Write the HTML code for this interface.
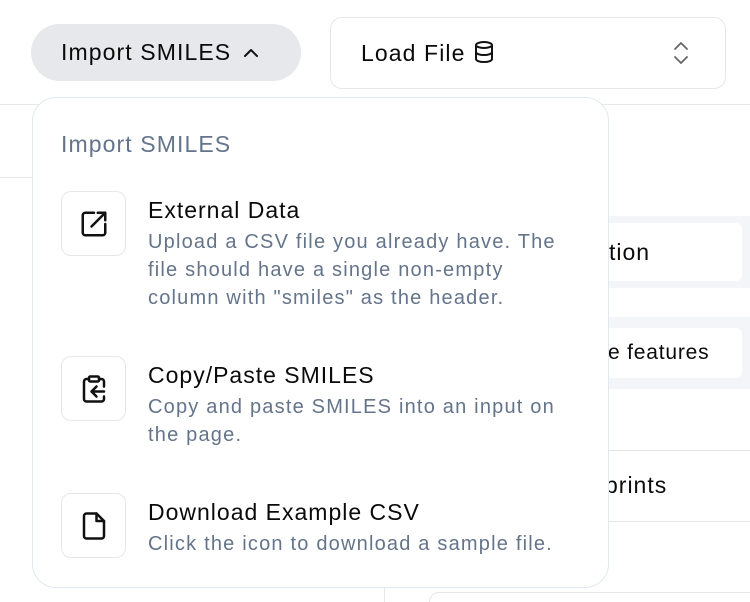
<!DOCTYPE html>
<html><head><meta charset="utf-8"><style>
*{box-sizing:border-box;margin:0;padding:0}
html,body{width:750px;height:602px;overflow:hidden}
body{background:#fff;position:relative;font-family:"Liberation Sans",sans-serif;color:#0a0a0a}
.abs{position:absolute}
.btn{left:31px;top:24px;width:270px;height:57px;border-radius:29px;background:#e7e8eb;font-size:23px;line-height:57px;padding-left:30px;letter-spacing:1.1px;white-space:nowrap}
.load{left:330px;top:17px;width:396px;height:72px;border:1px solid #e5e7eb;border-radius:12px;font-size:23px;line-height:70px;padding-left:30px;letter-spacing:1.1px}
.menu{left:32px;top:97px;width:577px;height:491px;border:1px solid #e2e8f0;border-radius:24px;background:#fff}
.h{left:61px;top:131px;font-size:23px;color:#64748b;letter-spacing:1.1px}
.ib{left:61px;width:65px;height:65px;border:1px solid #e5e7eb;border-radius:10px;display:flex;align-items:center;justify-content:center}
.t{left:148px;font-size:23px;letter-spacing:1px;white-space:nowrap}
.d{left:148px;font-size:20px;line-height:28px;color:#64748b;letter-spacing:1.2px;white-space:nowrap}
.line{background:#e5e7eb}
</style></head><body>
<div class="abs line" style="left:0;top:104px;width:750px;height:1px"></div>
<div class="abs line" style="left:0;top:177px;width:40px;height:1px"></div>
<div class="abs" style="left:600px;top:216px;width:150px;height:72px;background:#f3f5f8"></div>
<div class="abs" style="left:600px;top:223px;width:142px;height:58px;background:#fff;border-radius:6px;font-size:23px;letter-spacing:1px;line-height:58px;padding-left:9px">tion</div>
<div class="abs" style="left:600px;top:317px;width:150px;height:72px;background:#f3f5f8"></div>
<div class="abs" style="left:600px;top:328px;width:142px;height:50px;background:#fff;border-radius:6px;font-size:21px;letter-spacing:0.8px;line-height:50px;padding-left:8px">e features</div>
<div class="abs line" style="left:600px;top:450px;width:150px;height:1px"></div>
<div class="abs" style="left:605px;top:472px;font-size:23px;letter-spacing:1px">prints</div>
<div class="abs line" style="left:600px;top:521px;width:150px;height:1px"></div>
<div class="abs line" style="left:384px;top:587px;width:1px;height:15px"></div>
<div class="abs" style="left:429px;top:592px;width:340px;height:20px;border:1px solid #e5e7eb;border-radius:12px"></div>

<div class="abs btn">Import SMILES <svg width="20" height="14" viewBox="0 0 20 14" style="margin-left:2px;vertical-align:1px"><path d="M4 11l6-6 6 6" fill="none" stroke="#111" stroke-width="2" stroke-linecap="round" stroke-linejoin="round"/></svg></div>
<div class="abs load">Load File <svg width="22" height="24" viewBox="0 0 22 24" style="vertical-align:-3px;margin-left:0"><ellipse cx="11" cy="5" rx="8" ry="3" fill="none" stroke="#111" stroke-width="2"/><path d="M3 5v14c0 1.7 3.6 3 8 3s8-1.3 8-3V5M3 12c0 1.7 3.6 3 8 3s8-1.3 8-3" fill="none" stroke="#111" stroke-width="2"/></svg>
<svg class="abs" style="left:340px;top:22px" width="20" height="26" viewBox="0 0 20 26"><path d="M4 9l6-6 6 6M4 17l6 6 6-6" fill="none" stroke="#666" stroke-width="1.8" stroke-linecap="round" stroke-linejoin="round"/></svg></div>

<div class="abs menu"></div>
<div class="abs h">Import SMILES</div>

<div class="abs ib" style="top:191px"><svg width="30" height="30" viewBox="0 0 24 24" fill="none" stroke="#111" stroke-width="2" stroke-linecap="round" stroke-linejoin="round"><path d="M12 3H5a2 2 0 0 0-2 2v14a2 2 0 0 0 2 2h14a2 2 0 0 0 2-2v-7"/><path d="M15 3h6v6M10 14L21 3"/></svg></div>
<div class="abs t" style="top:197px">External Data</div>
<div class="abs d" style="top:228px">Upload a CSV file you already have. The<br>file should have a single non-empty<br>column with "smiles" as the header.</div>

<div class="abs ib" style="top:356px"><svg width="30" height="30" viewBox="0 0 24 24" fill="none" stroke="#111" stroke-width="2" stroke-linecap="round" stroke-linejoin="round"><rect x="8" y="2" width="8" height="4" rx="1"/><path d="M16 4h2a2 2 0 0 1 2 2v4M8 4H6a2 2 0 0 0-2 2v14a2 2 0 0 0 2 2h12a2 2 0 0 0 2-2v-2"/><path d="M20 14H10M14 10l-4 4 4 4"/></svg></div>
<div class="abs t" style="top:362px">Copy/Paste SMILES</div>
<div class="abs d" style="top:393px">Copy and paste SMILES into an input on<br>the page.</div>

<div class="abs ib" style="top:493px"><svg width="30" height="30" viewBox="0 0 24 24" fill="none" stroke="#111" stroke-width="2" stroke-linecap="round" stroke-linejoin="round"><path d="M14 2H6a2 2 0 0 0-2 2v16a2 2 0 0 0 2 2h12a2 2 0 0 0 2-2V8z"/><path d="M14 2v6h6"/></svg></div>
<div class="abs t" style="top:499px">Download Example CSV</div>
<div class="abs d" style="top:530px">Click the icon to download a sample file.</div>
</body></html>
